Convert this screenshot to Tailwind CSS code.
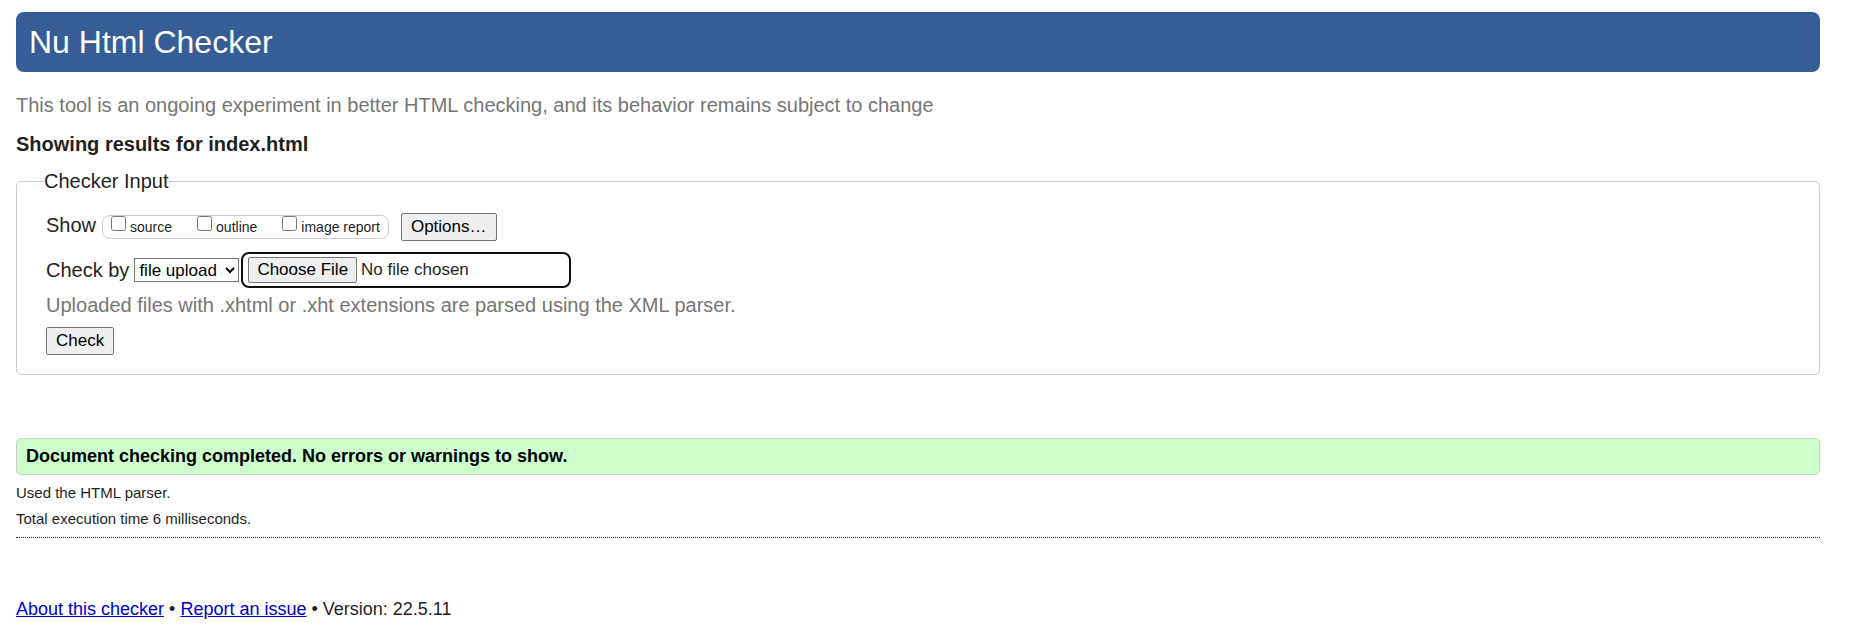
<!DOCTYPE html>
<html lang="en">
<head>
<meta charset="utf-8">
<title>Nu Html Checker</title>
<script src="https://cdn.jsdelivr.net/npm/@tailwindcss/browser@4"></script>
</head>
<body class="bg-white pt-3 pl-4 pr-[55px] font-['Liberation_Sans',Arial,sans-serif] text-xl leading-6 text-[#1f1f1f]">
<header class="rounded-lg bg-[#365d95] px-[13px] py-2.5">
  <h1 class="text-[32px] leading-10 text-white">Nu Html Checker</h1>
</header>
<main>
  <p class="mt-[21px] text-[#757575]">This tool is an ongoing experiment in better HTML checking, and its behavior remains subject to change</p>
  <h2 class="mt-[15px] font-bold">Showing results for index.html</h2>
  <form>
    <fieldset class="mt-[13px] rounded-[5px] border border-[#cccccc] pr-7 pb-[19px] pl-[29px]">
      <legend class="-ml-0.5 leading-6">Checker Input</legend>
      <div class="mt-5 flex items-center">
        <span class="pb-1">Show</span>
        <div class="ml-1.5 flex h-6 items-center gap-[25px] rounded-lg border border-[#cccccc] px-2 text-sm">
          <label class="flex gap-1"><input type="checkbox" class="mt-px size-[15px]"><span class="leading-6">source</span></label>
          <label class="flex gap-1"><input type="checkbox" class="mt-px size-[15px]"><span class="leading-6">outline</span></label>
          <label class="flex gap-1"><input type="checkbox" class="mt-px size-[15px]"><span class="leading-6">image report</span></label>
        </div>
        <button type="button" class="ml-3 h-7 rounded-xs border border-[#767676] bg-[#efefef] px-[9px] text-[17px] leading-6 text-black">Options…</button>
      </div>
      <div class="mt-[11px] flex items-center">
        <label for="docselect">Check by</label>
        <select id="docselect" class="ml-[5px] h-6 w-[105px] border border-[#767676] bg-white text-[17px] leading-5 text-black"><option>file upload</option></select>
        <input type="file" aria-label="File to check" class="ml-0.5 h-9 w-[330px] rounded-lg border-2 border-[#101010] px-[5px] py-[3px] text-[17px] leading-6 file:mr-1 file:h-[26px] file:rounded-xs file:border file:border-solid file:border-[#767676] file:bg-[#efefef] file:px-2 file:text-black">
      </div>
      <p class="mt-[5px] text-[#757575]">Uploaded files with .xhtml or .xht extensions are parsed using the XML parser.</p>
      <button type="submit" class="mt-2.5 block h-7 rounded-xs border border-[#767676] bg-[#efefef] px-[9px] text-[17px] leading-6 text-black">Check</button>
    </fieldset>
  </form>
  <p class="mt-[63px] rounded-[5px] border border-[#cccccc] bg-[#ccffcc] px-[9px] py-[5px] text-lg leading-[25px] font-bold text-black">Document checking completed. No errors or warnings to show.</p>
  <div class="mt-[5px] border-b border-dotted border-[#333333] pb-[5px] text-[15px] leading-[26px]">
    <p>Used the HTML parser.</p>
    <p>Total execution time 6 milliseconds.</p>
  </div>
</main>
<footer class="mt-[59px] text-lg leading-6">
  <a href="#about" class="text-[#0000cc] underline">About this checker</a> • <a href="#issues" class="text-[#0000cc] underline">Report an issue</a> • Version: 22.5.11
</footer>
</body>
</html>
